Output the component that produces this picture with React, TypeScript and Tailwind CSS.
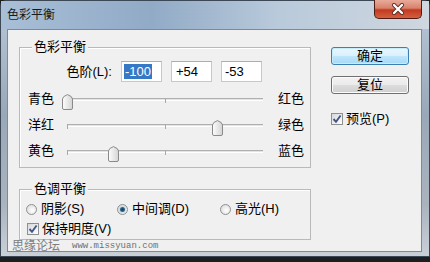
import React from "react";

const font = "font-['Liberation_Sans','Noto_Sans_CJK_SC',sans-serif]";

function Thumb({ left }: { left: number }) {
  return (
    <svg
      className="absolute top-[8px]"
      style={{ left }}
      width="11"
      height="16"
      viewBox="0 0 11 16"
    >
      <defs>
        <linearGradient id="thumbFill" x1="0" x2="1" y1="0" y2="0">
          <stop offset="0" stopColor="#fdfdfd" />
          <stop offset="1" stopColor="#d4d4d4" />
        </linearGradient>
      </defs>
      <path
        d="M0.5 5 Q0.5 2.4 5.5 0.6 Q10.5 2.4 10.5 5 V14 Q10.5 15.5 9 15.5 H2 Q0.5 15.5 0.5 14 Z"
        fill="url(#thumbFill)"
        stroke="#8a8a8a"
      />
    </svg>
  );
}

function Slider({ left, right, value }: { left: string; right: string; value: number }) {
  const x = 5 + ((value + 100) / 200) * 196 - 5.5;
  return (
    <div className="flex h-[26px] items-center pl-[8px]">
      <span className="w-[34px]">{left}</span>
      <div className="relative flex h-full w-[206px] items-center px-[5px]">
        <div className="h-[3px] w-full border-t border-b border-t-[#b0b0b0] border-b-white bg-[#e4e4e4]" />
        <span className="absolute left-[5px] top-[12px] h-[5px] w-px bg-[#a8a8a8]" />
        <span className="absolute left-[103px] top-[12px] h-[5px] w-px bg-[#a8a8a8]" />
        <Thumb left={x} />
      </div>
      <span className="ml-[10px]">{right}</span>
    </div>
  );
}

function Check() {
  return (
    <span className="flex h-[12px] w-[12px] items-center justify-center border border-[#8e8f8f] bg-[linear-gradient(135deg,#d8d8d8,#ffffff)]">
      <svg width="10" height="10" viewBox="0 0 10 10">
        <path d="M1.5 5 L4 7.8 L8.6 1.5" fill="none" stroke="#3f5789" strokeWidth="1.9" />
      </svg>
    </span>
  );
}

function Radio({ label, on, width }: { label: string; on?: boolean; width: string }) {
  return (
    <div className={`flex items-center gap-[4px] ${width}`}>
      <span className="flex h-[11px] w-[11px] items-center justify-center rounded-full border border-[#8e8f8f] bg-[radial-gradient(circle_at_60%_60%,#ffffff,#d6d6d6)]">
        {on && (
          <span className="h-[5px] w-[5px] rounded-full bg-[radial-gradient(circle,#123c58,#3d7fa8)] shadow-[0_0_2px_#5ba3d0]" />
        )}
      </span>
      <span>{label}</span>
    </div>
  );
}

function Group({ title, className, children }: { title: string; className: string; children: React.ReactNode }) {
  return (
    <div className={`relative border border-[#b9b9b9] shadow-[inset_1px_1px_0_#ffffff] ${className}`}>
      <span className="absolute left-[12px] top-[-9px] bg-[#f0f0f0] px-[2px] leading-[16px]">{title}</span>
      {children}
    </div>
  );
}

export default function App() {
  return (
    <div className={`relative h-[262px] w-[430px] overflow-hidden bg-[#1c1f20] text-[13px] text-black ${font}`}>
      <div className="flex h-[257px] w-[430px] flex-col rounded-t-[6px] border border-[#3d4857] bg-[linear-gradient(to_bottom,#b7c8da,#99a8b8_45%,#aab4bf_80%,#c9d0d8)]">
        <div className="flex h-[28px] justify-between bg-[linear-gradient(to_right,#a9bfd7,#91aac6_35%,#b9cadb_65%,#cfd7df)]">
          <span className="pl-[6px] pt-[6px] text-[12px] leading-[16px] text-[#1a1a1a]">色彩平衡</span>
          <div className="mr-[7px] -mt-px flex h-[19px] w-[48px] items-center justify-center rounded-b-[5px] border border-t-0 border-[#4e1c14] bg-[linear-gradient(to_bottom,#e9aa9a,#d8826b_45%,#c2391f_55%,#d4603f)]">
            <svg width="14" height="12" viewBox="0 0 14 12">
              <path d="M3 2 L11 10 M11 2 L3 10" stroke="#5a2a22" strokeWidth="4" strokeLinecap="round" />
              <path d="M3 2 L11 10 M11 2 L3 10" stroke="#ffffff" strokeWidth="2.4" strokeLinecap="round" />
            </svg>
          </div>
        </div>

        <div className="ml-[6px] flex h-[223px] w-[415px] border border-[#7d8998] bg-[#f0f0f0] pl-[11px] pt-[17px]">
          <div className="flex w-[292px] flex-col gap-[21px]">
            <Group title="色彩平衡" className="h-[121px]">
              <div className="mt-[13px] flex h-[21px] items-center gap-[9px]">
                <span className="w-[92px] text-right">色阶(L):</span>
                <div className="flex h-[21px] w-[41px] items-center border border-[#c5c8cc] border-t-[#abadb3] bg-white pl-[2px]">
                  <span className="bg-[#3478c6] px-px leading-[15px] text-white">-100</span>
                </div>
                <div className="flex h-[21px] w-[41px] items-center border border-[#c5c8cc] border-t-[#abadb3] bg-white pl-[4px]">
                  +54
                </div>
                <div className="flex h-[21px] w-[41px] items-center border border-[#c5c8cc] border-t-[#abadb3] bg-white pl-[3px]">
                  -53
                </div>
              </div>
              <div className="mt-[4px]">
                <Slider left="青色" right="红色" value={-100} />
                <Slider left="洋红" right="绿色" value={54} />
                <Slider left="黄色" right="蓝色" value={-53} />
              </div>
            </Group>

            <Group title="色调平衡" className="h-[51px] pt-[9px]">
              <div className="flex h-[20px] items-center pl-[6px]">
                <Radio label="阴影(S)" width="w-[91px]" />
                <Radio label="中间调(D)" on width="w-[103px]" />
                <Radio label="高光(H)" width="w-[70px]" />
              </div>
              <div className="flex h-[20px] items-center gap-[3px] pl-[7px]">
                <Check />
                <span>保持明度(V)</span>
              </div>
            </Group>
          </div>

          <div className="ml-[20px] flex flex-col">
            <button className="h-[18px] w-[78px] rounded-[3px] border border-[#3c7fb1] bg-[linear-gradient(to_bottom,#eaf6fd,#d9f0fc_50%,#bee6fd_50%,#a7d9f5)] text-[13px] leading-[14px] shadow-[inset_0_0_0_1px_#c9ecfd]">
              确定
            </button>
            <button className="mt-[11px] h-[18px] w-[78px] rounded-[3px] border border-[#707070] bg-[linear-gradient(to_bottom,#f2f2f2,#ebebeb_50%,#dddddd_50%,#cfcfcf)] text-[13px] leading-[14px] shadow-[inset_0_0_0_1px_#fbfbfb]">
              复位
            </button>
            <div className="mt-[15px] flex items-center gap-[3px]">
              <Check />
              <span>预览(P)</span>
            </div>
          </div>
        </div>
      </div>

      <div className="absolute left-[12px] top-[240px] flex items-center">
        <span className="text-[12px] leading-[12px] text-[#7d7d7d]">思缘论坛</span>
        <span className="ml-[12px] font-['Liberation_Mono',monospace] text-[9px] leading-[12px] text-[#6f6f6f]">
          www.missyuan.com
        </span>
      </div>
    </div>
  );
}
